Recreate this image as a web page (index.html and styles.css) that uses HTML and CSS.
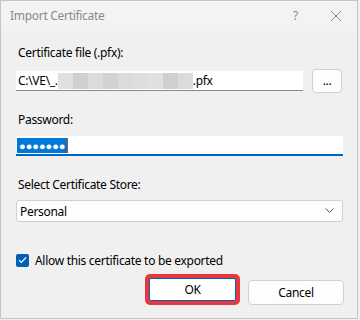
FILE: index.html
```html
<!DOCTYPE html>
<html>
<head>
<meta charset="utf-8">
<link rel="stylesheet" href="styles.css">
</head>
<body>
<div class="window">
  <div class="titlebar">
    <span class="title">Import Certificate</span>
    <span class="help">?</span>
    <svg class="close" width="12" height="12" viewBox="0 0 12 12"><path d="M1 1L11 11M11 1L1 11" stroke="#8a8a8a" stroke-width="1" fill="none"/></svg>
  </div>
  <div class="content">
    <div class="label l1">Certificate file (.pfx):</div>
    <div class="filerow">
      <div class="textbox file"><span>C:\VE\_.</span><span class="mosaic"><i class="m a"></i><i class="m b"></i><i class="m c"></i><i class="m d"></i><i class="m c"></i><i class="m e"></i><i class="m a"></i><i class="m b"></i><i class="m c"></i></span><span>.pfx</span></div>
      <div class="browse">...</div>
    </div>
    <div class="label l2">Password:</div>
    <div class="textbox pwd"><span class="sel">●●●●●●●</span><span class="caret"></span></div>
    <div class="label l3">Select Certificate Store:</div>
    <div class="select"><span>Personal</span><svg width="9" height="6" viewBox="0 0 9 6"><path d="M0.5 0.5L4.5 4.5L8.5 0.5" stroke="#5a5a5a" stroke-width="1" fill="none"/></svg></div>
    <div class="checkrow">
      <span class="checkbox"><svg width="9" height="8" viewBox="0 0 9 8"><path d="M1 4.2L3.3 6.5L8 1.5" stroke="#fff" stroke-width="1.1" fill="none"/></svg></span>
      <span>Allow this certificate to be exported</span>
    </div>
    <div class="buttons">
      <div class="highlight"><div class="btn ok">OK</div></div>
      <div class="btn cancel">Cancel</div>
    </div>
  </div>
</div>
</body>
</html>
```
FILE: styles.css
```css
html, body {
  margin: 0;
  padding: 0;
  background: #f0f0f0;
}
body {
  font-family: "Noto Sans", "Open Sans", sans-serif;
  font-size: 12px;
  letter-spacing: -0.3px;
  color: #000;
}
.window {
  width: 356px;
  height: 317px;
  border: 1px solid #c4c4c4;
  background: #f0f0f0;
  display: flex;
  flex-direction: column;
  box-sizing: content-box;
}
.titlebar {
  height: 30px;
  background: #f3f3f3;
  display: flex;
  align-items: center;
  position: relative;
}
.title {
  margin-left: 9px;
  color: #8a8a8a;
  font-size: 12px;
  margin-top: -1px;
}
.help {
  margin-left: auto;
  color: #8a8a8a;
  font-size: 12px;
  margin-right: 32px;
  margin-top: -1px;
}
.close {
  margin-right: 15px;
  margin-top: -1px;
}
.content {
  padding: 14px 14px 0 15px;
  display: flex;
  flex-direction: column;
}
.label {
  height: 16px;
  line-height: 16px;
  padding-left: 2px;
}
.l1 { margin-bottom: 8px; }
.l2 { margin-top: 19px; margin-bottom: 8px; }
.l3 { margin-top: 21px; margin-bottom: 7px; }
.filerow {
  display: flex;
  align-items: center;
  height: 24px;
}
.textbox {
  background: #fff;
  box-sizing: border-box;
  height: 20px;
  display: flex;
  align-items: center;
  padding-left: 2px;
  white-space: nowrap;
}
.file {
  width: 287px;
  border-bottom: 1px solid #8a8a8a;
}
.mosaic {
  display: flex;
  height: 16px;
  margin-top: 1px;
}
.m {
  display: block;
  width: 15px;
  height: 16px;
}
.m.a { background: #e0e0e0; }
.m.b { background: #cfcfcf; }
.m.c { background: #dbdbdb; }
.m.d { background: #d2d2d2; }
.m.e { background: #dedede; }
.browse {
  margin-left: 9px;
  width: 30px;
  height: 24px;
  box-sizing: border-box;
  border: 1px solid #d0d0d0;
  border-radius: 4px;
  background: #fdfdfd;
  text-align: center;
  line-height: 22px;
}
.pwd {
  width: 327px;
  border-bottom: 2px solid #0067c0;
  padding-left: 1px;
}
.sel {
  background: #0078d7;
  color: #fff;
  height: 15px;
  line-height: 15px;
  font-size: 11px;
  letter-spacing: 0;
  padding: 0 1px 0 2px;
}
.caret {
  width: 1px;
  height: 15px;
  background: #c05000;
}
.select {
  width: 327px;
  height: 22px;
  box-sizing: border-box;
  border: 1px solid #d0d0d0;
  border-radius: 3px;
  background: #fdfdfd;
  display: flex;
  align-items: center;
  justify-content: space-between;
  padding: 0 8px 0 3px;
}
.checkrow {
  margin-top: 30px;
  height: 16px;
  display: flex;
  align-items: center;
}
.checkbox {
  width: 13px;
  height: 13px;
  border-radius: 2px;
  background: #005fb8;
  display: flex;
  align-items: center;
  justify-content: center;
  margin-right: 6px;
}
.buttons {
  margin-top: 6px;
  display: flex;
  justify-content: flex-end;
  align-items: flex-end;
}
.highlight {
  width: 95px;
  height: 31px;
  box-sizing: border-box;
  border: 4px solid #e8383d;
  border-radius: 5px;
  margin-right: 8px;
  background: #e8383d;
}
.btn {
  box-sizing: border-box;
  text-align: center;
  background: #fdfdfd;
}
.ok {
  height: 23px;
  border: 1px solid #0067c0;
  border-radius: 2px;
  background: #fff;
  line-height: 21px;
}
.cancel {
  width: 96px;
  height: 25px;
  border: 1px solid #d0d0d0;
  border-radius: 4px;
  line-height: 23px;
  margin-right: -1px;
}
```
